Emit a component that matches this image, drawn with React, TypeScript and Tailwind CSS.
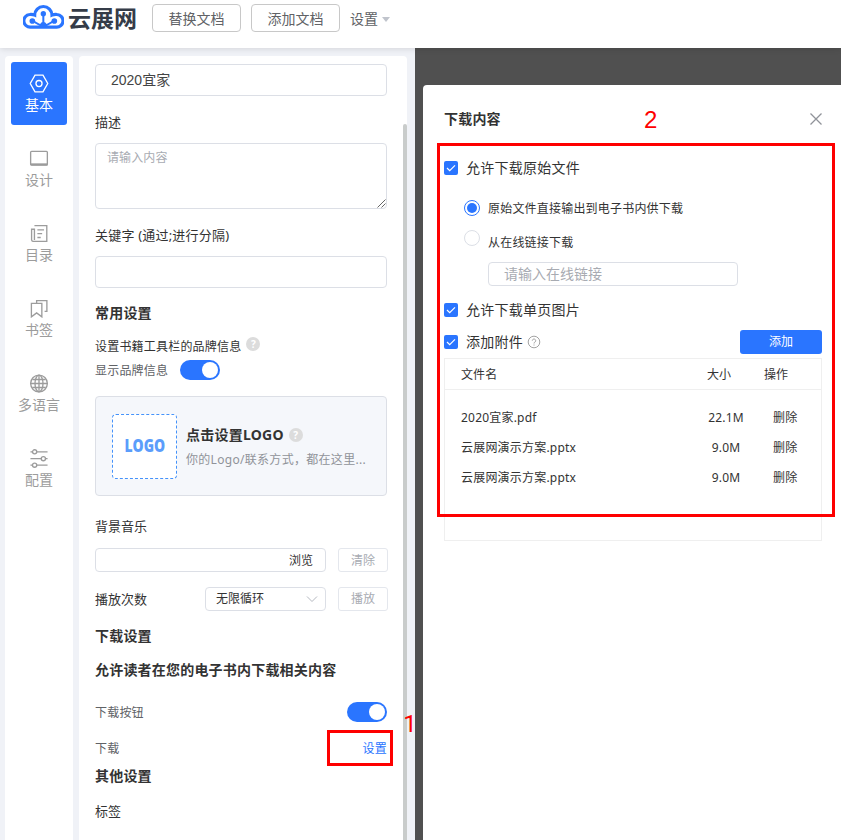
import type { ReactNode } from "react";

type NavItem = { label: string; icon: ReactNode; active?: boolean };

const navItems: NavItem[] = [
  {
    label: "基本",
    active: true,
    icon: (
      <>
        <path d="M5.8 1.2h8.4l5 8.8-5 8.8H5.8L.8 10z" />
        <circle cx="10" cy="10" r="3.2" />
      </>
    ),
  },
  {
    label: "设计",
    icon: (
      <>
        <rect x="1.2" y="2.5" width="17.6" height="14.5" rx="1" />
        <path d="M1.2 16.2h17.6" strokeWidth="2.2" />
      </>
    ),
  },
  {
    label: "目录",
    icon: (
      <>
        <path d="M5.2 1.7h13v16.6H3.8a2 2 0 01-1.6-1.6V5.5h3v11.3" />
        <path d="M8.3 6.2h7M8.3 10.2h5M8.3 14.2h3.5" />
      </>
    ),
  },
  {
    label: "书签",
    icon: (
      <>
        <path d="M2 4.6h11v14.2l-5.5-4.2L2 18.8z" />
        <path d="M7.5 4.4V1.7h10.8V13h-2.4" />
      </>
    ),
  },
  {
    label: "多语言",
    icon: (
      <>
        <circle cx="10" cy="10" r="8.8" />
        <ellipse cx="10" cy="10" rx="4.2" ry="8.8" />
        <path d="M1.5 10h17M10 1.5v17M3 5.8h14M3 14.2h14" />
      </>
    ),
  },
  {
    label: "配置",
    icon: (
      <>
        <path d="M1 3h2.2M7.6 3H19M1 10.2h11.4M16.8 10.2H19M1 17h2.2M7.6 17H19" />
        <circle cx="5.4" cy="3" r="2.2" />
        <circle cx="14.6" cy="10.2" r="2.2" />
        <circle cx="5.4" cy="17" r="2.2" />
      </>
    ),
  },
];

const files = [
  { name: "2020宜家.pdf", size: "22.1M" },
  { name: "云展网演示方案.pptx", size: "9.0M" },
  { name: "云展网演示方案.pptx", size: "9.0M" },
];

function CloudLogo() {
  return (
    <svg className="h-[25px] w-[41px] shrink-0" viewBox="69 13 123 75" fill="none" stroke="#2a75ff">
      <path
        d="M92 82.5h77a18.5 18.5 0 002-38q-8-1-15 2a26 26 0 00-52 0q-7-3-15-2a18.500 18.500 0 003 38z"
        strokeWidth="9.5"
      />
      <path d="M130 42v34M98 64c8 1 12 13 32 13 20 0 24-12 32-13" strokeWidth="6" />
      <g fill="#2a75ff" stroke="none">
        <circle cx="130" cy="42" r="8" />
        <circle cx="97" cy="64" r="8.5" />
        <circle cx="163" cy="64" r="8.5" />
        <circle cx="130" cy="76" r="9" />
      </g>
    </svg>
  );
}

function Switch() {
  return (
    <span className="flex h-5 w-10 shrink-0 items-center justify-end rounded-full bg-[#2a75ff] pr-[2px]">
      <span className="h-4 w-4 rounded-full bg-white" />
    </span>
  );
}

function Help() {
  return (
    <span className="flex h-[14px] w-[14px] items-center justify-center rounded-full bg-[#dcdcdc] text-[10px] leading-none font-bold text-white">
      ?
    </span>
  );
}

function Check({ label, children }: { label: string; children?: ReactNode }) {
  return (
    <div className="flex items-center text-sm tracking-[0.25px] text-[#333]">
      <span className="mr-2 flex h-[14px] w-[14px] items-center justify-center rounded-[2px] bg-[#2a75ff]">
        <svg width="10" height="8" viewBox="0 0 10 8" fill="none" stroke="white" strokeWidth="1.2">
          <path d="M1 4l2.7 2.7L9 1.3" />
        </svg>
      </span>
      {label}
      {children}
    </div>
  );
}

function Header() {
  return (
    <header className="relative z-10 flex h-12 shrink-0 bg-white pt-1 pl-[23px] shadow-[0_1px_6px_rgba(0,0,0,0.12)]">
      <CloudLogo />
      <span className="ml-1 w-[84px] text-[23px] leading-[28px] font-bold whitespace-nowrap text-[#353c48]">云展网</span>
      <button className="h-7 w-[89px] rounded border border-[#c8c8c8] pt-0.5 text-sm text-[#606266]">
        替换文档
      </button>
      <button className="ml-[10px] h-7 w-[89px] rounded border border-[#c8c8c8] pt-0.5 text-sm text-[#606266]">
        添加文档
      </button>
      <div className="ml-[10px] flex h-7 items-center pt-0.5 text-sm text-[#606266]">
        设置
        <span className="ml-1 border-x-4 border-t-[5px] border-x-transparent border-t-[#c0c4cc]" />
      </div>
    </header>
  );
}

function Sidebar() {
  return (
    <nav className="mt-2 ml-[5px] flex w-[68px] shrink-0 flex-col items-center gap-3 rounded-t bg-white pt-[6px]">
      {navItems.map((item) => (
        <div
          key={item.label}
          className={`flex h-[63px] w-14 flex-col items-center rounded-[3px] pt-3 ${
            item.active ? "bg-[#2a75ff] text-white" : "text-[#9c9c9c]"
          }`}
        >
          <svg className="h-[19px] w-5" viewBox="0 0 20 20" fill="none" stroke="currentColor" strokeWidth="1.4">
            {item.icon}
          </svg>
          <span className="mt-[2px] text-sm leading-5 whitespace-nowrap">{item.label}</span>
        </div>
      ))}
    </nav>
  );
}

function Settings() {
  return (
    <section className="mt-2 ml-[6px] flex w-[328px] shrink-0 rounded-t bg-white text-[13px] text-[#333]">
      <div className="w-[324px] shrink-0 pt-2 pl-4">
        <div className="flex h-8 w-[292px] items-center rounded border border-[#dcdfe6] px-[15px] font-['Liberation_Sans','Noto_Sans_CJK_SC',sans-serif] text-sm text-[#444]">
          2020宜家
        </div>
        <div className="flex h-[47px] items-center pt-[6px]">描述</div>
        <div className="relative h-[66px] w-[292px] rounded border border-[#dcdfe6] px-[11px] pt-[5px] text-xs leading-[18px] tracking-[0.1px] text-[#a8abb2]">
          请输入内容
          <svg className="absolute right-0 bottom-0" width="9" height="9" viewBox="0 0 9 9" stroke="#555" strokeWidth="0.9">
            <path d="M.5 8.5l8-8M4.5 8.5l4-4" />
          </svg>
        </div>
        <div className="flex h-[47px] items-center pt-[6px] tracking-[0.2px]">关键字 (通过;进行分隔)</div>
        <div className="h-8 w-[292px] rounded border border-[#dcdfe6]" />

        <h3 className="flex h-[50px] items-center text-sm font-bold tracking-[0.2px]">常用设置</h3>
        <div className="flex h-4 items-center gap-[5px] text-xs tracking-[0.2px]">
          <span className="pt-0.5">设置书籍工具栏的品牌信息</span>
          <span className="mb-1">
            <Help />
          </span>
        </div>
        <div className="mt-[6px] flex h-5 items-center gap-3 text-xs tracking-[0.2px] text-[#606266]">
          <span className="pt-0.5">显示品牌信息</span>
          <Switch />
        </div>

        {/* Brand card */}
        <div className="mt-4 flex h-[100px] w-[292px] items-center rounded border border-[#dcdfe6] bg-[#f5f7fb] pl-4">
          <div className="flex h-[65px] w-[65px] shrink-0 items-center justify-center rounded border-[1.5px] border-dashed border-[#4492fa] bg-white">
            <span className="scale-x-[0.82] font-['Open_Sans','Noto_Sans',sans-serif] text-[17px] font-extrabold text-[#5b9dfb]">
              LOGO
            </span>
          </div>
          <div className="ml-[9px] whitespace-nowrap">
            <div className="flex h-6 items-center gap-[5px] pt-0.5 text-sm font-bold tracking-[0.25px]">
              点击设置LOGO <Help />
            </div>
            <div className="h-6 pt-[5px] text-xs leading-[18px] tracking-[0.3px] text-[#909399]">
              你的Logo/联系方式，都在这里...
            </div>
          </div>
        </div>

        <div className="flex h-[52px] items-center pt-[10px]">背景音乐</div>
        <div className="flex gap-3 text-xs">
          <div className="flex h-6 w-[231px] items-center justify-end rounded border border-[#dcdfe6] pt-px pr-3">浏览</div>
          <button className="h-6 w-[50px] rounded-[3px] border border-[#e4e7ed] pt-px text-[#a8abb2]">清除</button>
        </div>
        <div className="mt-[15px] flex text-xs">
          <span className="w-[110px] pt-1 text-[13px]">播放次数</span>
          <div className="flex h-6 w-[121px] items-center justify-between rounded border border-[#dcdfe6] pr-[7px] pl-[10px]">
            无限循环
            <svg width="12" height="8" viewBox="0 0 12 8" fill="none" stroke="#b4b8c0">
              <path d="M1 1.5l5 5 5-5" />
            </svg>
          </div>
          <button className="ml-3 h-6 w-[50px] rounded-[3px] border border-[#e4e7ed] text-[#a8abb2]">播放</button>
        </div>

        <h3 className="flex h-[50px] items-center text-sm font-bold tracking-[0.2px]">下载设置</h3>
        <h3 className="flex h-5 items-center pb-0.5 text-sm font-bold tracking-[0.2px]">允许读者在您的电子书内下载相关内容</h3>
        <div className="mt-[21px] flex h-5 w-[292px] items-center justify-between text-xs tracking-[0.2px] text-[#606266]">
          <span className="pt-0.5">下载按钮</span>
          <Switch />
        </div>
        <div className="relative mt-4 flex h-5 w-[292px] items-center justify-between pt-0.5 text-xs tracking-[0.2px] text-[#606266]">
          下载
          <a className="text-[#2a75ff]">设置</a>
          <span className="absolute -top-2 -right-[6px] h-9 w-[66px] border-3 border-[#fe0000]" />
          <span className="absolute -top-[28px] -right-[30px] font-[Roboto,sans-serif] text-2xl leading-[28px] text-[#fe0000]">
            1
          </span>
        </div>
        <h3 className="flex h-9 items-center text-sm font-bold tracking-[0.2px]">其他设置</h3>
        <div className="flex h-[34px] items-center pt-px">标签</div>
      </div>
      <div className="mt-[68px] w-1 shrink-0 rounded-t bg-[#c9cccb]" />
    </section>
  );
}

function DownloadDialog() {
  return (
    <main className="ml-2 min-w-0 flex-1 bg-[#505050] pt-[37px] pl-2">
      <div className="relative h-full rounded-tl-[4px] bg-white pl-[21px] text-xs text-[#333]">
        <div className="flex h-[68px] items-center justify-between pr-[19px]">
          <h2 className="text-sm font-bold tracking-[0.2px]">下载内容</h2>
          <svg width="12" height="12" viewBox="0 0 12 12" stroke="#909399" strokeWidth="1.3">
            <path d="M.5.5l11 11M11.5.5l-11 11" />
          </svg>
        </div>
        <div className="flex h-[30px] items-center">
          <Check label="允许下载原始文件" />
        </div>
        <div className="flex h-[50px] items-center pl-5">
          <span className="mr-2 flex h-4 w-4 items-center justify-center rounded-full border border-[#2a75ff]">
            <span className="h-[10px] w-[10px] rounded-full bg-[#2a75ff]" />
          </span>
          <span className="pt-px tracking-[0.2px]">原始文件直接输出到电子书内供下载</span>
        </div>
        <div className="flex h-[19px] items-center pl-5">
          <span className="mr-2 mb-[9px] h-4 w-4 rounded-full border border-[#dcdfe6]" />
          <span className="tracking-[0.2px]">从在线链接下载</span>
        </div>
        <div className="mt-[10px] ml-11 flex h-6 w-[250px] items-center rounded border border-[#dcdfe6] px-[15px] text-sm text-[#a8abb2]">
          请输入在线链接
        </div>
        <div className="mt-3 flex h-6 items-center">
          <Check label="允许下载单页图片" />
        </div>
        <div className="mt-2 flex h-6 w-[378px] items-center justify-between">
          <Check label="添加附件">
            <svg className="ml-1" width="14" height="14" viewBox="0 0 14 14" fill="none" stroke="#999" strokeWidth="0.9">
              <circle cx="7" cy="7" r="5.8" />
              <path d="M5.3 5.7a1.7 1.7 0 113 1.1C7.5 7.3 7 7.5 7 8.5M7 9.5v1" />
            </svg>
          </Check>
          <button className="h-6 w-[82px] rounded-[3px] bg-[#2a75ff] text-white">添加</button>
        </div>

        {/* Attachments */}
        <div className="mt-1 h-[183px] w-[378px] border border-[#efefef]">
          <div className="flex h-[31px] items-center border-b border-[#efefef] pt-0.5 pl-4 tracking-[0.1px]">
            <span className="w-[246px]">文件名</span>
            <span className="w-[57px]">大小</span>
            <span>操作</span>
          </div>
          <div className="pt-[13px]">
            {files.map((file, i) => (
              <div key={i} className="flex h-[30px] items-center pl-4 tracking-[0.2px]">
                <span className="w-[240px]">{file.name}</span>
                <span className="w-[50px] text-center">{file.size}</span>
                <span className="ml-[22px]">删除</span>
              </div>
            ))}
          </div>
        </div>

        <span className="absolute top-[58px] left-[14px] h-[374px] w-[398px] border-3 border-[#fe0000]" />
        <span className="absolute top-[21px] left-[221px] font-['Liberation_Sans',sans-serif] text-2xl leading-[28px] text-[#fe0000]">
          2
        </span>
      </div>
    </main>
  );
}

export default function App() {
  return (
    <div className="flex h-[840px] w-[841px] flex-col overflow-hidden bg-[#f0f2f7] font-['Noto_Sans','Noto_Sans_CJK_SC',sans-serif]">
      <Header />
      <div className="flex min-h-0 flex-1">
        <Sidebar />
        <Settings />
        <DownloadDialog />
      </div>
    </div>
  );
}
